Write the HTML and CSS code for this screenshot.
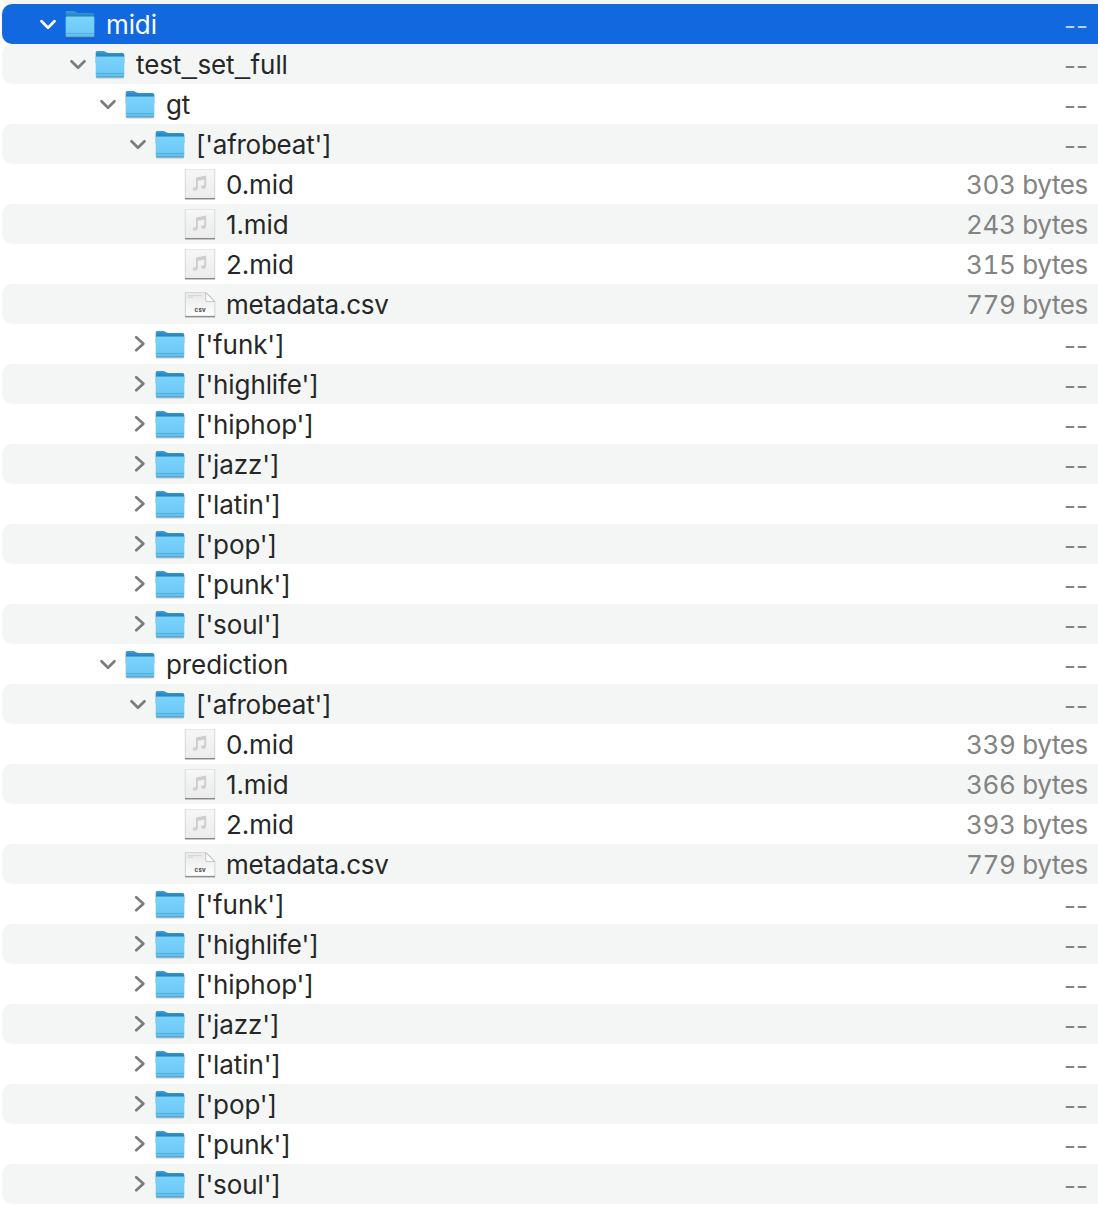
FILE: index.html
```
<!DOCTYPE html>
<html lang="en">
<head>
<meta charset="utf-8">
<title>midi</title>
<link rel="stylesheet" href="styles.css">
</head>
<body>
<svg class="defs" aria-hidden="true">
  <defs>
    <linearGradient id="front" x1="0" y1="0" x2="0" y2="1"><stop offset="0" stop-color="#7bd3fb"/><stop offset=".7" stop-color="#6fcbf6"/><stop offset="1" stop-color="#5fbdea"/></linearGradient>
    <linearGradient id="back" x1="0" y1="0" x2="0" y2="1"><stop offset="0" stop-color="#3d9dd0"/><stop offset=".5" stop-color="#1b80c4"/></linearGradient>
    <linearGradient id="paper" x1="0" y1="0" x2="0" y2="1"><stop offset="0" stop-color="#f7f7f7"/><stop offset="1" stop-color="#ececec"/></linearGradient>
    <linearGradient id="sheet" x1="0" y1="0" x2="0" y2="1"><stop offset="0" stop-color="#e9e9e9"/><stop offset="1" stop-color="#fdfdfd"/></linearGradient>
  </defs>
  <symbol id="down" viewBox="0 0 20 20"><path d="M3.500 7.200 10 13.800l6.500-6.600" fill="none" stroke="currentColor" stroke-width="2.700" stroke-linecap="round" stroke-linejoin="round"/></symbol>
  <symbol id="right" viewBox="0 0 20 20"><path d="M8.200 3.200 15.400 9.700l-7.200 6.500" fill="none" stroke="currentColor" stroke-width="2.700" stroke-linecap="round" stroke-linejoin="round"/></symbol>
  <symbol id="folder" viewBox="0 0 32 32">
    <path d="M2 27h28v2.500q0 1-1.200 1H3.200q-1.200 0-1.200-1z" fill="#000" opacity=".22"/>
    <path d="M1.700 4.600q0-1.500 1.500-1.500h6.300q1 0 1.800.6l1.400.9q.8.400 1.800.4h14.100q1.700 0 1.700 1.700V15H1.700z" fill="url(#back)"/>
    <path d="M1.700 9.700q0-1.200 1.300-1.200h26q1.300 0 1.300 1.200v18.200q0 1.300-1.300 1.300H3q-1.300 0-1.300-1.300z" fill="url(#front)"/>
    <path d="M2 25.500h28" stroke="#4ba9d7" stroke-width=".8"/>
    <path d="M2.300 28.800h27.400" stroke="#4295bf" stroke-width=".7"/>
  </symbol>
  <symbol id="music" viewBox="0 0 32 32">
    <path d="M.8 1.300h30.400v30H.8z" fill="#d2d2d2"/>
    <path d="M1 29.900h30v1.500H1z" fill="#898989"/>
    <path d="M1.600 1.600h28.800v28.300H1.600z" fill="url(#paper)"/>
    <path d="M12.900 20.400V10.300l8.300-1.600v9.800M12.900 12l8.300-1.600" fill="none" stroke="#cecece" stroke-width="1.900"/>
    <ellipse cx="11.200" cy="20.900" rx="2.500" ry="1.800" fill="#cecece"/><ellipse cx="19.500" cy="19.100" rx="2.500" ry="1.800" fill="#cecece"/>
  </symbol>
  <symbol id="csv" viewBox="0 0 32 32">
    <path d="M.8 4.300h21.500l9 9v15.500H.8z" fill="#cbcbcb"/>
    <path d="M1.200 27.800h29.700v1.600H1.200z" fill="#8d8d8d"/>
    <path d="M1.700 4.900h20l8.800 8.700v14.200H1.700z" fill="url(#sheet)"/>
    <path d="M4 7.600h14M4 9.200h5" stroke="#d0d0d0" stroke-width=".9"/>
    <path d="M21.700 4.900v7.400q0 1.300 1.300 1.300h7.500z" fill="#fff" stroke="#b7b7b7" stroke-width=".8"/>
  </symbol>
</svg>
<main class="list">
  <div class="row tail"></div>
  <div class="row d0 selected"><svg class="chev"><use href="#down"/></svg><svg class="icon"><use href="#folder"/></svg><span class="name">midi</span><span class="size none">--</span></div>
  <div class="row d1"><svg class="chev"><use href="#down"/></svg><svg class="icon"><use href="#folder"/></svg><span class="name">test<b>_</b>set<b>_</b>full</span><span class="size none">--</span></div>
  <div class="row d2"><svg class="chev"><use href="#down"/></svg><svg class="icon"><use href="#folder"/></svg><span class="name">gt</span><span class="size none">--</span></div>
  <div class="row d3"><svg class="chev"><use href="#down"/></svg><svg class="icon"><use href="#folder"/></svg><span class="name snug">['afrobeat']</span><span class="size none">--</span></div>
  <div class="row d4"><svg class="icon"><use href="#music"/></svg><span class="name">0.mid</span><span class="size">303 bytes</span></div>
  <div class="row d4"><svg class="icon"><use href="#music"/></svg><span class="name">1.mid</span><span class="size">243 bytes</span></div>
  <div class="row d4"><svg class="icon"><use href="#music"/></svg><span class="name">2.mid</span><span class="size">315 bytes</span></div>
  <div class="row d4"><svg class="icon"><use href="#csv"/><text x="16.300" y="23.600" text-anchor="middle" class="tag">csv</text></svg><span class="name snug">metadata.csv</span><span class="size">779 bytes</span></div>
  <div class="row d3"><svg class="chev"><use href="#right"/></svg><svg class="icon"><use href="#folder"/></svg><span class="name">['funk']</span><span class="size none">--</span></div>
  <div class="row d3"><svg class="chev"><use href="#right"/></svg><svg class="icon"><use href="#folder"/></svg><span class="name">['highlife']</span><span class="size none">--</span></div>
  <div class="row d3"><svg class="chev"><use href="#right"/></svg><svg class="icon"><use href="#folder"/></svg><span class="name">['hiphop']</span><span class="size none">--</span></div>
  <div class="row d3"><svg class="chev"><use href="#right"/></svg><svg class="icon"><use href="#folder"/></svg><span class="name">['jazz']</span><span class="size none">--</span></div>
  <div class="row d3"><svg class="chev"><use href="#right"/></svg><svg class="icon"><use href="#folder"/></svg><span class="name">['latin']</span><span class="size none">--</span></div>
  <div class="row d3"><svg class="chev"><use href="#right"/></svg><svg class="icon"><use href="#folder"/></svg><span class="name">['pop']</span><span class="size none">--</span></div>
  <div class="row d3"><svg class="chev"><use href="#right"/></svg><svg class="icon"><use href="#folder"/></svg><span class="name">['punk']</span><span class="size none">--</span></div>
  <div class="row d3"><svg class="chev"><use href="#right"/></svg><svg class="icon"><use href="#folder"/></svg><span class="name">['soul']</span><span class="size none">--</span></div>
  <div class="row d2"><svg class="chev"><use href="#down"/></svg><svg class="icon"><use href="#folder"/></svg><span class="name">prediction</span><span class="size none">--</span></div>
  <div class="row d3"><svg class="chev"><use href="#down"/></svg><svg class="icon"><use href="#folder"/></svg><span class="name snug">['afrobeat']</span><span class="size none">--</span></div>
  <div class="row d4"><svg class="icon"><use href="#music"/></svg><span class="name">0.mid</span><span class="size">339 bytes</span></div>
  <div class="row d4"><svg class="icon"><use href="#music"/></svg><span class="name">1.mid</span><span class="size">366 bytes</span></div>
  <div class="row d4"><svg class="icon"><use href="#music"/></svg><span class="name">2.mid</span><span class="size">393 bytes</span></div>
  <div class="row d4"><svg class="icon"><use href="#csv"/><text x="16.300" y="23.600" text-anchor="middle" class="tag">csv</text></svg><span class="name snug">metadata.csv</span><span class="size">779 bytes</span></div>
  <div class="row d3"><svg class="chev"><use href="#right"/></svg><svg class="icon"><use href="#folder"/></svg><span class="name">['funk']</span><span class="size none">--</span></div>
  <div class="row d3"><svg class="chev"><use href="#right"/></svg><svg class="icon"><use href="#folder"/></svg><span class="name">['highlife']</span><span class="size none">--</span></div>
  <div class="row d3"><svg class="chev"><use href="#right"/></svg><svg class="icon"><use href="#folder"/></svg><span class="name">['hiphop']</span><span class="size none">--</span></div>
  <div class="row d3"><svg class="chev"><use href="#right"/></svg><svg class="icon"><use href="#folder"/></svg><span class="name">['jazz']</span><span class="size none">--</span></div>
  <div class="row d3"><svg class="chev"><use href="#right"/></svg><svg class="icon"><use href="#folder"/></svg><span class="name">['latin']</span><span class="size none">--</span></div>
  <div class="row d3"><svg class="chev"><use href="#right"/></svg><svg class="icon"><use href="#folder"/></svg><span class="name">['pop']</span><span class="size none">--</span></div>
  <div class="row d3"><svg class="chev"><use href="#right"/></svg><svg class="icon"><use href="#folder"/></svg><span class="name">['punk']</span><span class="size none">--</span></div>
  <div class="row d3"><svg class="chev"><use href="#right"/></svg><svg class="icon"><use href="#folder"/></svg><span class="name">['soul']</span><span class="size none">--</span></div>
</main>
</body>
</html>
```
FILE: styles.css
```
* { box-sizing: border-box; }
body {
  margin: 0;
  background: #fff;
  color: #262727;
  font: 400 26px/38px Inter, "Liberation Sans", sans-serif;
  overflow: hidden;
}
.defs { display: block; width: 0; height: 0; }
.list { height: 1206px; padding-left: 2px; }
.row {
  display: flex;
  align-items: center;
  height: 40px;
  padding-right: 10px;
  border-radius: 10px 0 0 10px;
}
.row:nth-child(odd) { background: #f4f6f5; }
.row.tail { height: 4px; border-radius: 0 0 0 10px; }
.row.selected { background: #1168df; color: #fff; }
.d0 { padding-left: 36px; }
.d1 { padding-left: 66px; }
.d2 { padding-left: 96px; }
.d3 { padding-left: 126px; }
.d4 { padding-left: 182px; }
.chev { width: 20px; height: 20px; margin-right: 6px; color: #7b7c7c; }
.selected .chev { color: #fff; }
.icon { width: 32px; height: 32px; }
.name { margin-left: 10px; padding-top: 2px; letter-spacing: -.1px; }
.name.snug { letter-spacing: -.25px; }
.name b {
  margin-left: .5px;
  font: 400 27px/0 "Liberation Sans", sans-serif;
  letter-spacing: .6px;
  vertical-align: 1px;
}
.size {
  margin-left: auto;
  padding-top: 2px;
  color: #828383;
  font-variant-numeric: tabular-nums;
  letter-spacing: -.35px;
}
.size.none { padding-top: 3px; font-variant-numeric: normal; letter-spacing: 0; }
.selected .size { color: #b7d1f5; }
.tag { font: 700 6px Inter, sans-serif; letter-spacing: .3px; fill: #444; }
```
